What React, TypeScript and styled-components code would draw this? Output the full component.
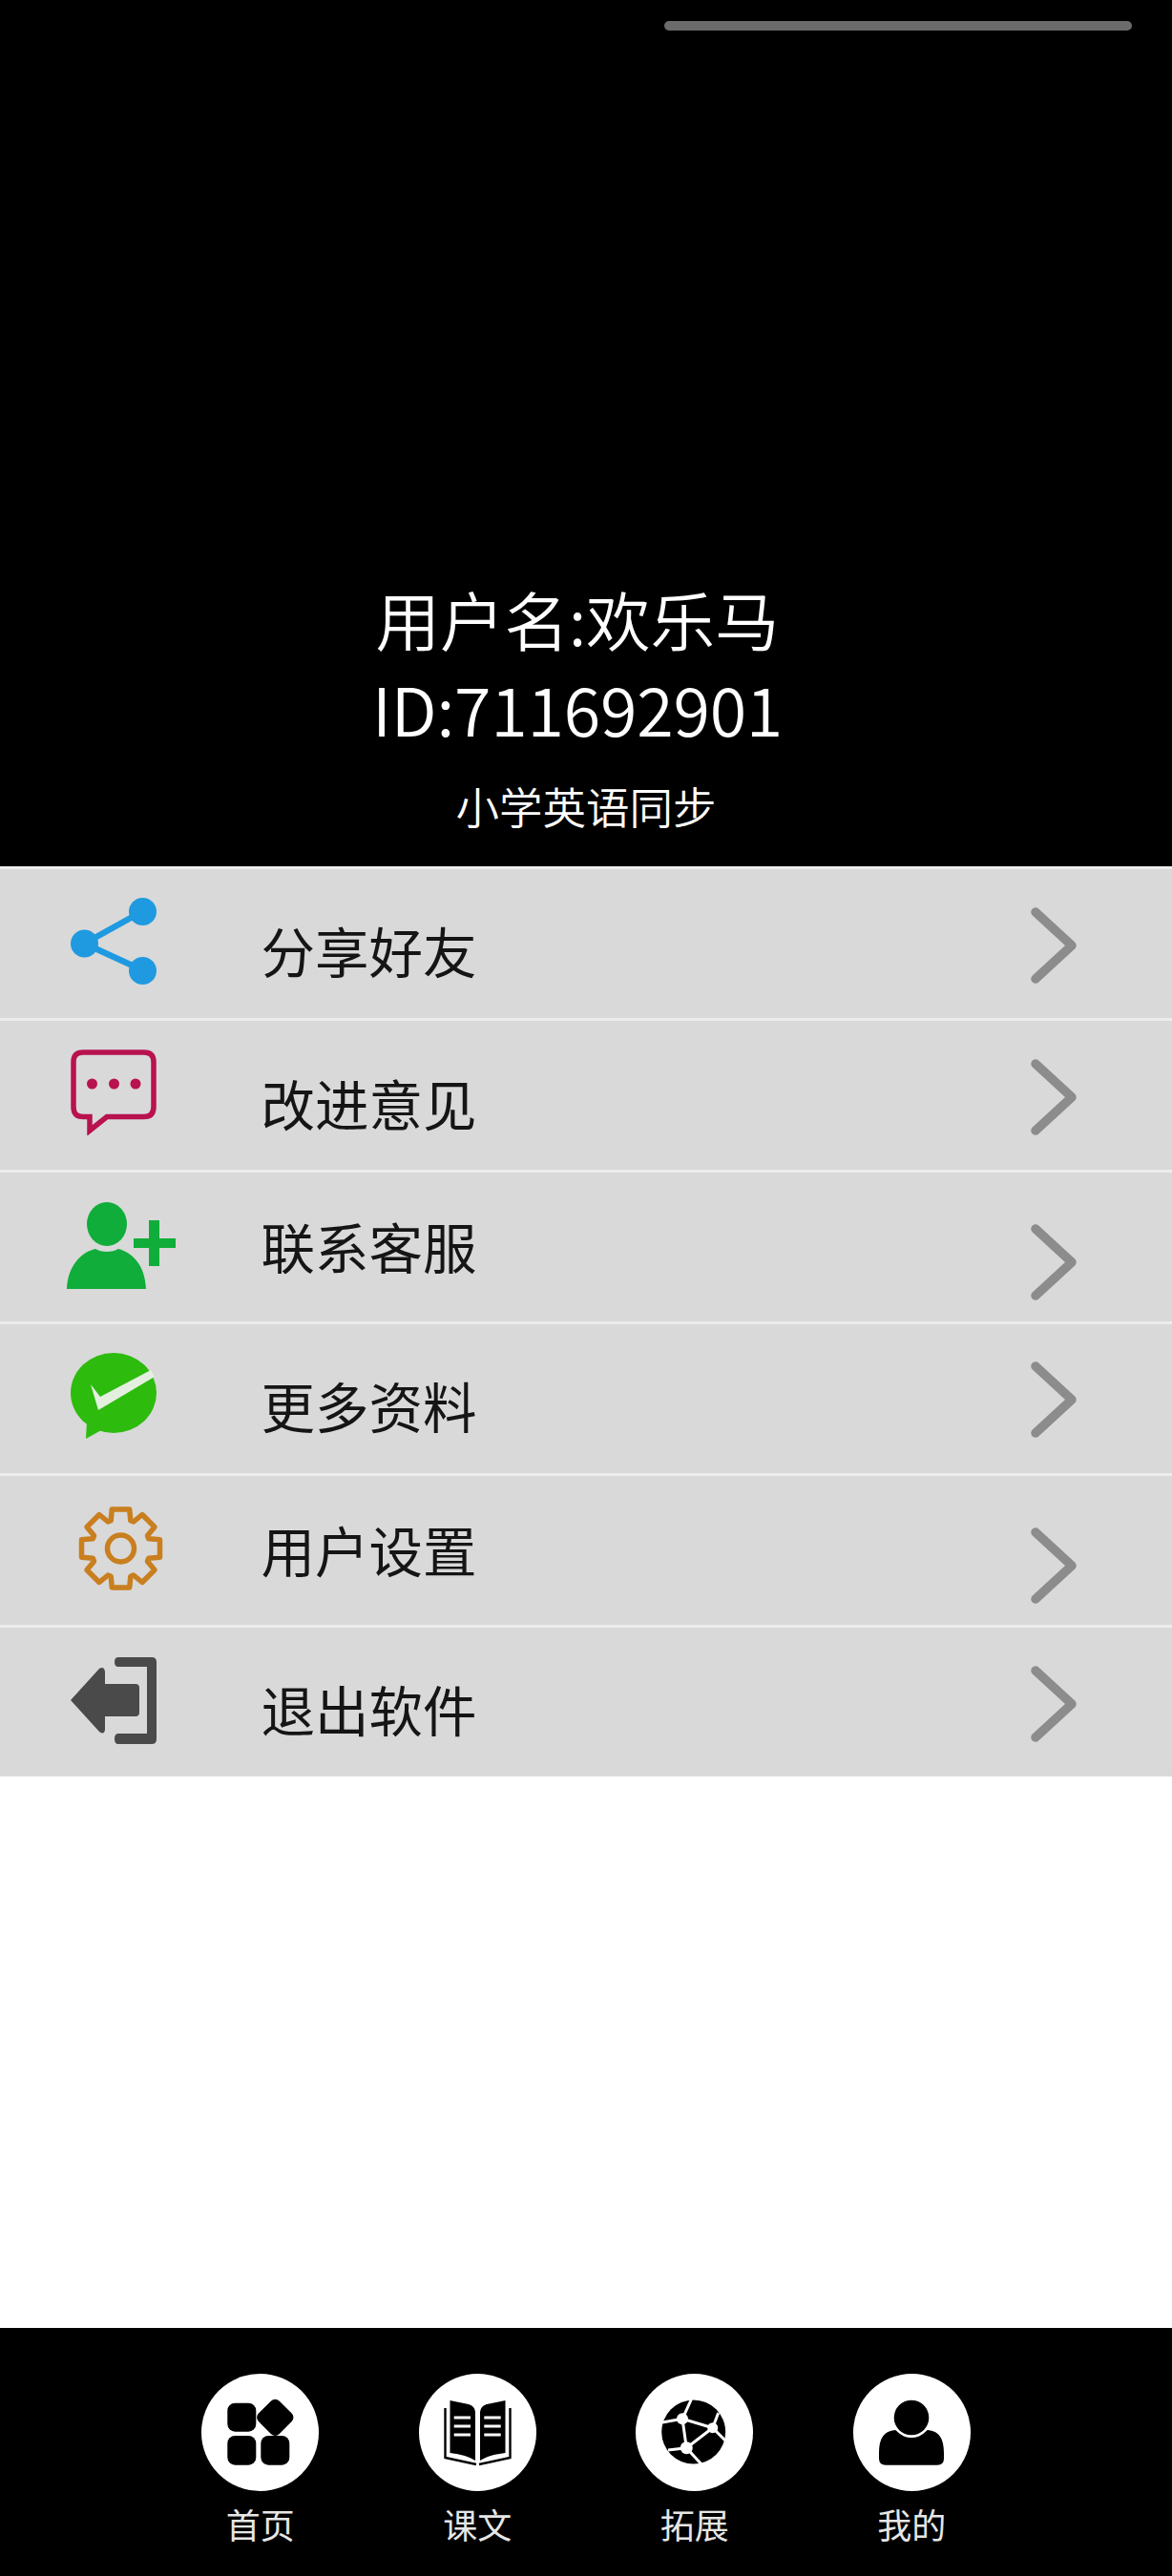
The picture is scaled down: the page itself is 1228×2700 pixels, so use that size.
import React from "react";
import styled, { createGlobalStyle } from "styled-components";

const Global = createGlobalStyle`
  html, body { margin: 0; padding: 0; background: #fff; }
  body { font-family: "Noto Sans CJK SC", "Noto Sans", sans-serif; }
`;

const Page = styled.div`
  width: 1228px;
  height: 2700px;
  display: flex;
  flex-direction: column;
  overflow: hidden;
`;

const Header = styled.header`
  height: 908px;
  flex: none;
  background: #000;
  color: #fff;
  display: flex;
  flex-direction: column;
  align-items: center;
  padding: 22px 0 14px;
  box-sizing: border-box;
`;

const ScrollBar = styled.div`
  width: 490px;
  height: 10px;
  border-radius: 5px;
  background: #6b6b6b;
  align-self: flex-end;
  margin-right: 42px;
`;

const UserName = styled.div`
  margin-top: auto;
  margin-right: 18px;
  font-size: 67.5px;
  line-height: 88px;
  height: 95px;
  font-weight: 350;
`;

const UserId = styled.div`
  margin-right: 18px;
  font-size: 70px;
  line-height: 86px;
  height: 95px;
  font-weight: 350;
  letter-spacing: -0.2px;
`;

const Grade = styled.div`
  font-size: 45.5px;
  line-height: 100px;
  height: 100px;
  font-weight: 350;
`;

const Menu = styled.div`
  flex: none;
  display: flex;
  flex-direction: column;
`;

const Row = styled.div`
  height: 159px;
  box-sizing: border-box;
  background: #d9d9d9;
  border-top: 3px solid #ececec;
  display: grid;
  grid-template-columns: 273.5px 1fr 148px;
  align-items: start;
`;

const IconSlot = styled.div<{ $x: number; $top: number }>`
  margin-left: ${(p) => p.$x}px;
  margin-top: ${(p) => p.$top}px;
  display: flex;
  svg { display: block; }
`;

const RowLabel = styled.div<{ $top: number }>`
  margin-top: ${(p) => p.$top}px;
  font-size: 56.5px;
  line-height: 60px;
  color: #151515;
`;

const Arrow = styled.svg<{ $top: number }>`
  display: block;
  margin-top: ${(p) => p.$top}px;
`;

const Blank = styled.div`
  flex: 1;
  background: #fff;
`;

const Nav = styled.nav`
  flex: none;
  height: 260px;
  background: #000;
  display: grid;
  grid-template-columns: repeat(4, 227.5px);
  justify-content: center;
  padding-top: 48px;
  box-sizing: border-box;
`;

const NavItem = styled.div`
  display: flex;
  flex-direction: column;
  align-items: center;
`;

const NavCircle = styled.div`
  width: 123px;
  height: 123px;
  border-radius: 50%;
  background: #fff;
  svg { display: block; }
`;

const NavLabel = styled.div`
  margin-top: 12px;
  font-size: 36px;
  line-height: 44px;
  color: #e6e6e6;
`;

// 8 tooth gear outline, generated instead of typing out 40 points
const gearPoints = (() => {
  const pts: string[] = [];
  for (let i = 0; i < 8; i++) {
    const a = (i * Math.PI) / 4 - Math.PI / 2;
    const step = [
      [-0.34, 31],
      [-0.22, 42],
      [0.22, 42],
      [0.34, 31],
    ];
    step.forEach(([d, r]) => {
      pts.push(`${(45 + r * Math.cos(a + d)).toFixed(1)},${(45 + r * Math.sin(a + d)).toFixed(1)}`);
    });
  }
  return pts.join(" ");
})();

const ShareIcon = () => (
  <svg width="90" height="91" viewBox="0 0 90 91">
    <path d="M75.6 14 L14.5 48 L75.6 76" fill="none" stroke="#1f9ae0" strokeWidth="6.5" />
    <circle cx="75.5" cy="14.5" r="14.5" fill="#1f9ae0" />
    <circle cx="14.5" cy="48" r="14.5" fill="#1f9ae0" />
    <circle cx="75.5" cy="76.5" r="14.5" fill="#1f9ae0" />
  </svg>
);

const ChatIcon = () => (
  <svg width="90" height="90" viewBox="0 0 90 90">
    <path
      d="M13 3 H77 Q87 3 87 13 V60 Q87 70.5 77 70.5 H38 L20 85 V70.5 H13 Q3 70.5 3 60 V13 Q3 3 13 3 Z"
      fill="none"
      stroke="#b8124f"
      strokeWidth="5.5"
    />
    <circle cx="22.5" cy="36" r="5.5" fill="#b8124f" />
    <circle cx="45.5" cy="36" r="5.5" fill="#b8124f" />
    <circle cx="68" cy="36" r="5.5" fill="#b8124f" />
  </svg>
);

const AddUserIcon = () => (
  <svg width="114" height="91" viewBox="0 0 114 91" fill="#10ad3a">
    <ellipse cx="42" cy="23" rx="21" ry="23" />
    <path d="M0 91 C1 66 16 52 30 49 C36 53 48 53 54 49 C69 53 82 66 83 91 Z" />
    <rect x="70" y="38" width="44" height="10" />
    <rect x="86" y="19" width="11" height="48" />
  </svg>
);

const WechatIcon = () => (
  <svg width="90" height="90" viewBox="0 0 90 90">
    <ellipse cx="45" cy="42" rx="45" ry="42" fill="#2dbb0e" />
    <path d="M17 72 L16 90 L34 80 Z" fill="#2dbb0e" />
    <path d="M21 33 L31 46 L84 18 L88 25 L29 60 Z" fill="#e4efe0" />
  </svg>
);

const GearIcon = () => (
  <svg width="91" height="90" viewBox="0 0 90 90" fill="none" stroke="#c97f1f" strokeWidth="5.5" strokeLinejoin="round">
    <polygon points={gearPoints} />
    <circle cx="45" cy="45" r="14" />
  </svg>
);

const ExitIcon = () => (
  <svg width="90" height="91" viewBox="0 0 90 91" fill="#4a4a4a">
    <path d="M50 0 H85 Q90 0 90 5 V86 Q90 91 85 91 H50 Q46 91 46 85.5 Q46 80 50 80 H80 V10 H50 Q46 10 46 5 Q46 0 50 0 Z" />
    <path d="M0 45 L30 12 Q35 9 36 15 V28 H68 Q72 28 72 32 V58 Q72 62 68 62 H36 V76 Q35 82 30 78 Z" />
  </svg>
);

const HomeGlyph = () => (
  <svg width="123" height="123" viewBox="0 0 123 123">
    <rect x="27.3" y="30.7" width="30" height="30" rx="8" />
    <rect x="27.3" y="65" width="30" height="30.7" rx="8" />
    <rect x="62.3" y="65" width="30" height="30.7" rx="8" />
    <rect x="62" y="30.5" width="30.6" height="30.6" rx="6" transform="rotate(45 77.3 45.8)" />
  </svg>
);

const BookGlyph = () => (
  <svg width="123" height="123" viewBox="0 0 123 123">
    <path d="M32.5 28 L52 32 Q58.5 34 59 40 V91 Q50 85 32.5 83 Z" />
    <path d="M90.5 28 L71 32 Q64.5 34 64 40 V91 Q73 85 90.5 83 Z" />
    <path d="M27.5 36 V88 L60 95 M95.5 36 V88 L63 95" fill="none" stroke="#000" strokeWidth="2.4" />
    <path d="M36.7 46 H54 M36.7 55 H54 M36.7 64 H54 M68.3 46 H85.7 M68.3 55 H85.7 M68.3 64 H85.7" stroke="#fff" strokeWidth="3" />
  </svg>
);

const GlobeGlyph = () => (
  <svg width="123" height="123" viewBox="0 0 123 123">
    <circle cx="60.7" cy="61" r="33.5" />
    <path
      d="M49 47.3 L58.3 27 M49 47.3 L28 51 M49 47.3 L80.7 56.7 M80.7 56.7 L86.7 41 M80.7 56.7 L95 71 M80.7 56.7 L53.3 77.7 M53.3 77.7 L49 47.3 M53.3 77.7 L34 80 M53.3 77.7 L69 95"
      fill="none"
      stroke="#fff"
      strokeWidth="3"
    />
    <circle cx="49" cy="47.3" r="6" fill="#fff" />
    <circle cx="80.7" cy="56.7" r="5.5" fill="#fff" />
    <circle cx="53.3" cy="77.7" r="6.5" fill="#fff" />
  </svg>
);

const PersonGlyph = () => (
  <svg width="123" height="123" viewBox="0 0 123 123">
    <path d="M27 83 C27 68 32 60 44 59 C50 62 72 62 78 59 C90 60 95 68 95 83 V89 Q95 95.7 88 95.7 H34 Q27 95.7 27 89 Z" />
    <circle cx="61" cy="46" r="21" fill="#fff" />
    <circle cx="61" cy="46" r="18.3" />
  </svg>
);

const rows = [
  { label: "分享好友", icon: <ShareIcon />, x: 74, iconTop: 30, textTop: 54, arrowTop: 40 },
  { label: "改进意见", icon: <ChatIcon />, x: 74, iconTop: 30, textTop: 55, arrowTop: 40 },
  { label: "联系客服", icon: <AddUserIcon />, x: 70, iconTop: 31, textTop: 46, arrowTop: 54 },
  { label: "更多资料", icon: <WechatIcon />, x: 74, iconTop: 30, textTop: 54, arrowTop: 39 },
  { label: "用户设置", icon: <GearIcon />, x: 81, iconTop: 31, textTop: 46, arrowTop: 54 },
  { label: "退出软件", icon: <ExitIcon />, x: 74, iconTop: 31, textTop: 54, arrowTop: 40 },
];

const tabs = [
  { label: "首页", glyph: <HomeGlyph /> },
  { label: "课文", glyph: <BookGlyph /> },
  { label: "拓展", glyph: <GlobeGlyph /> },
  { label: "我的", glyph: <PersonGlyph /> },
];

export default function App() {
  return (
    <Page>
      <Global />
      <Header>
        <ScrollBar />
        <UserName>用户名:欢乐马</UserName>
        <UserId>ID:711692901</UserId>
        <Grade>小学英语同步</Grade>
      </Header>
      <Menu>
        {rows.map((row) => (
          <Row key={row.label}>
            <IconSlot $x={row.x} $top={row.iconTop}>
              {row.icon}
            </IconSlot>
            <RowLabel $top={row.textTop}>{row.label}</RowLabel>
            <Arrow $top={row.arrowTop} width="48" height="80" viewBox="0 0 48 80">
              <path d="M5 5 L43 40 L5 75" fill="none" stroke="#8c8c8c" strokeWidth="9.5" strokeLinecap="round" strokeLinejoin="round" />
            </Arrow>
          </Row>
        ))}
      </Menu>
      <Blank />
      <Nav>
        {tabs.map((tab) => (
          <NavItem key={tab.label}>
            <NavCircle>{tab.glyph}</NavCircle>
            <NavLabel>{tab.label}</NavLabel>
          </NavItem>
        ))}
      </Nav>
    </Page>
  );
}
